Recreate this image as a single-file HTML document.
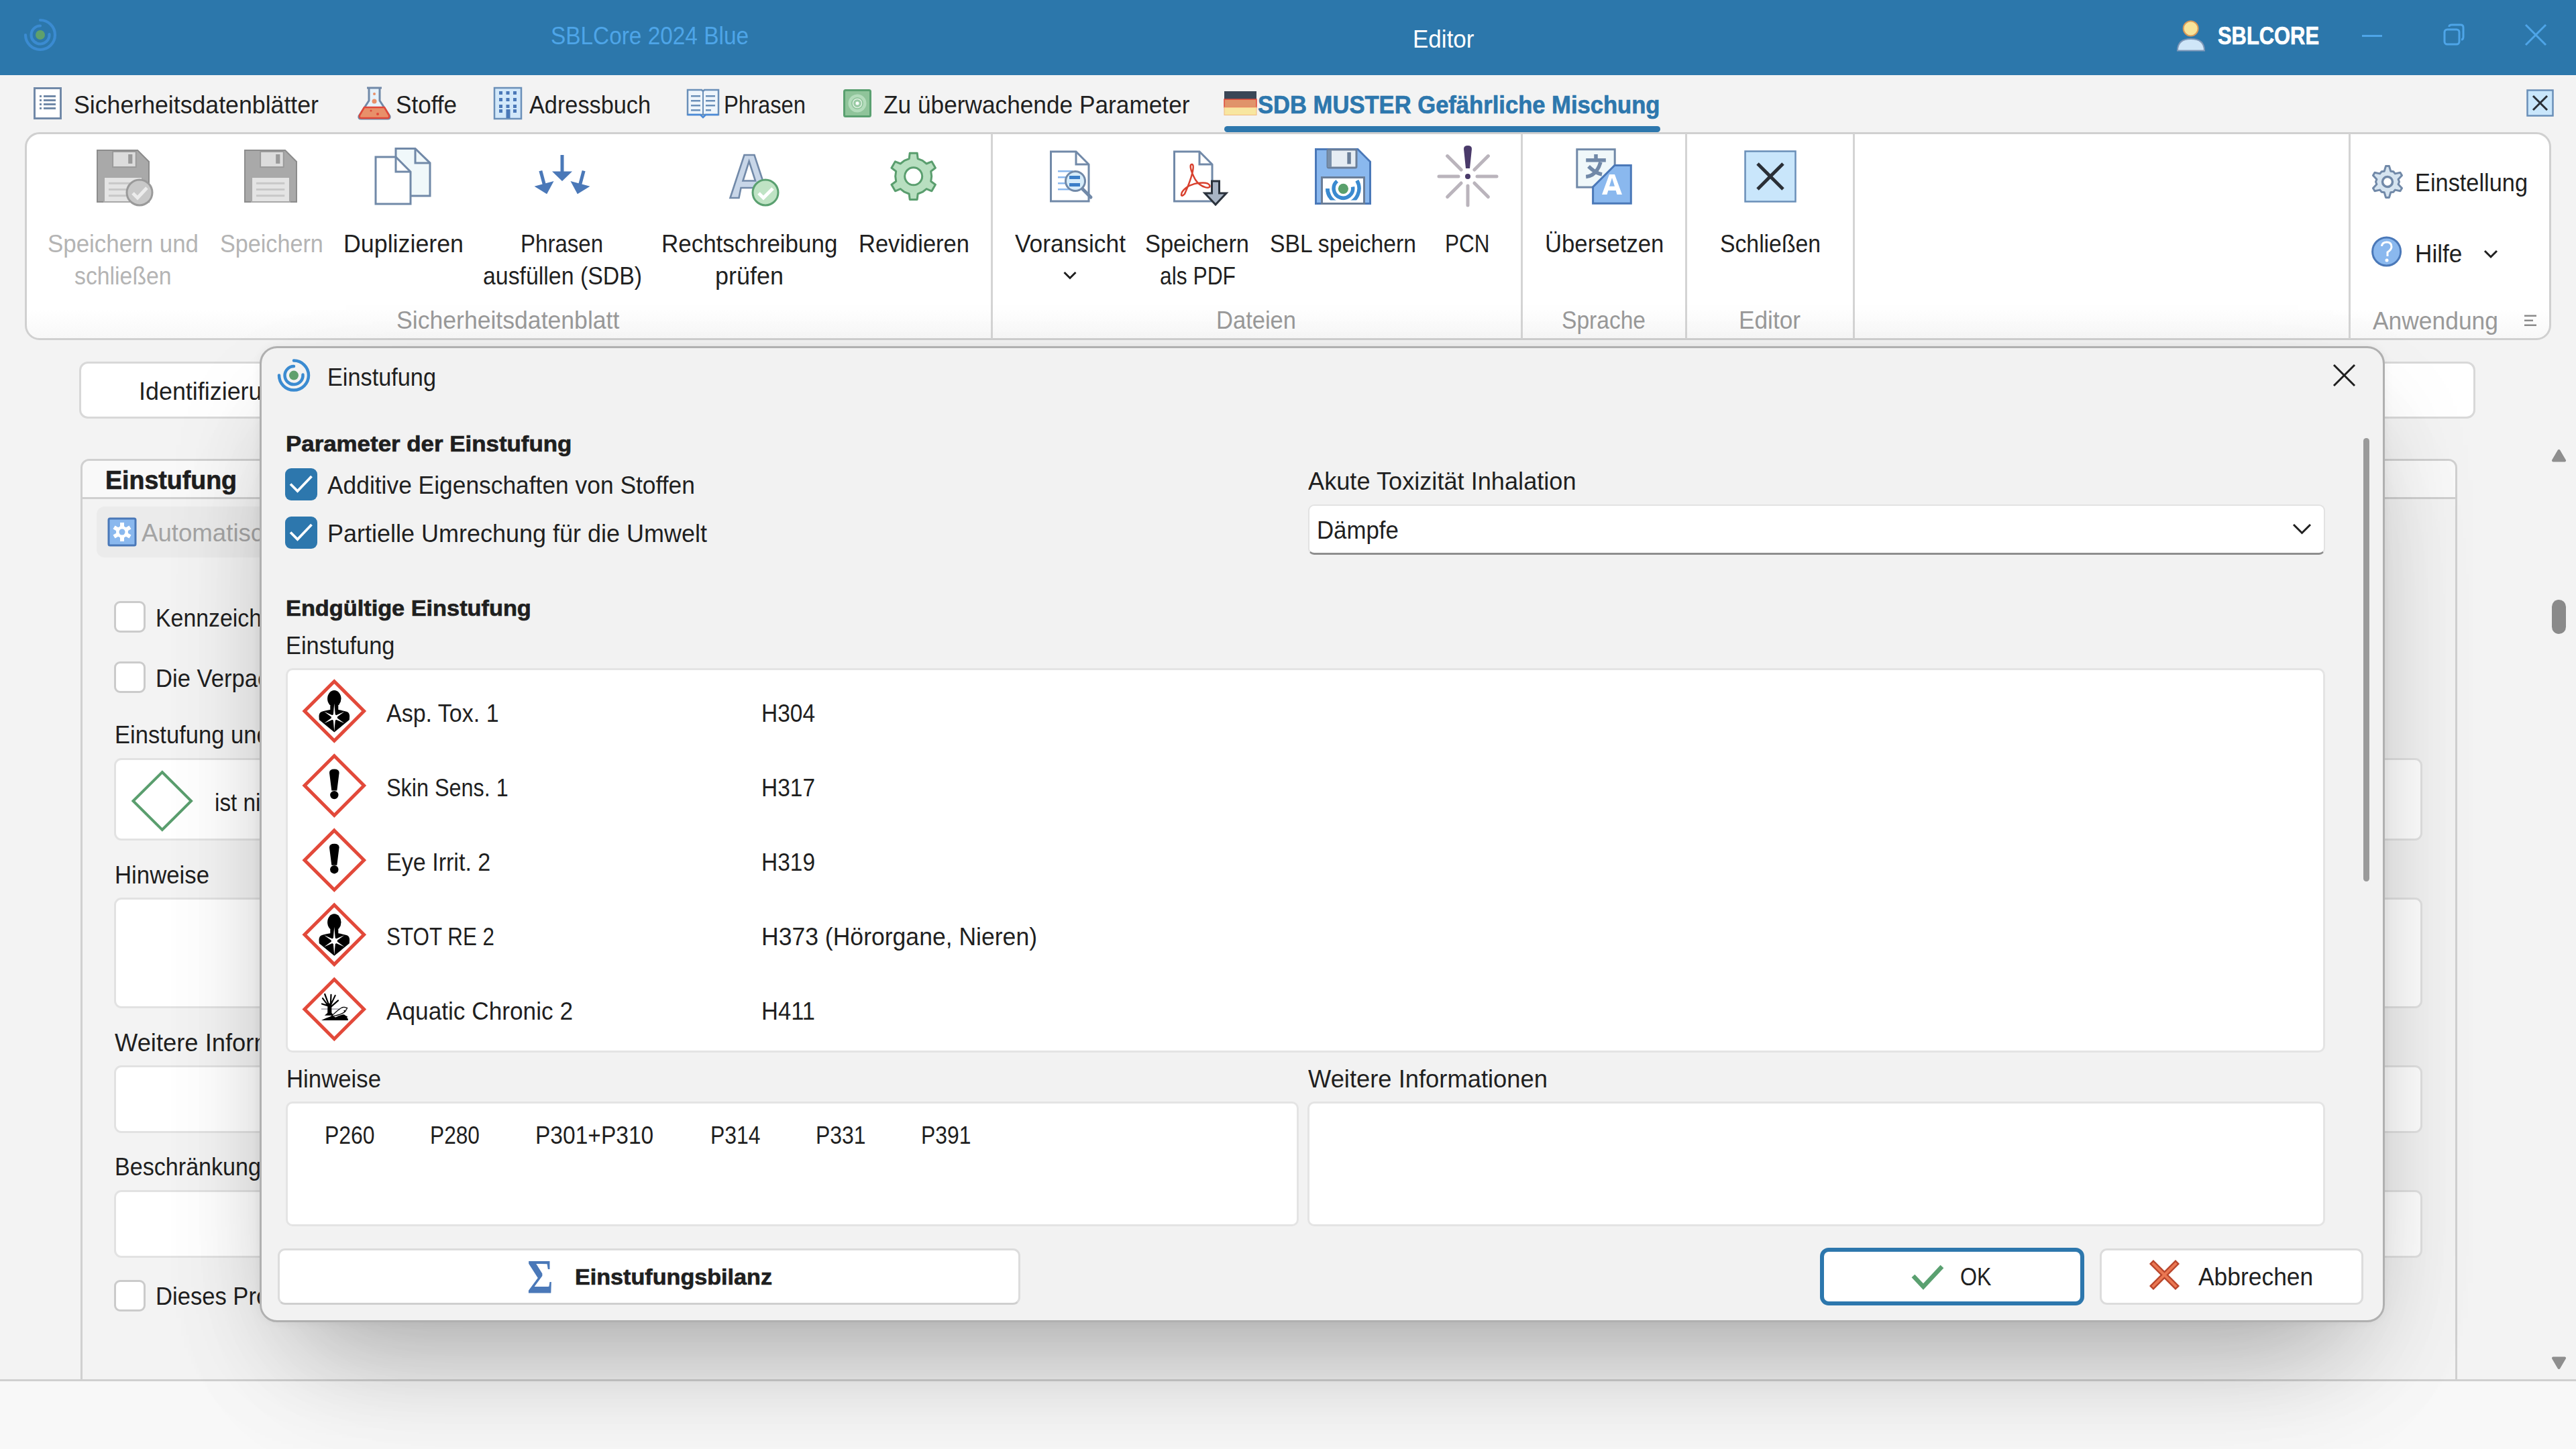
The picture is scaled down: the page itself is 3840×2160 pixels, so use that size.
<!DOCTYPE html>
<html><head><meta charset="utf-8"><style>

*{margin:0;padding:0;box-sizing:border-box}
html,body{width:3840px;height:2160px;overflow:hidden;background:#f3f3f3;font-family:"Liberation Sans",sans-serif}
.a{position:absolute}
.t{position:absolute;line-height:1;white-space:pre;transform-origin:0 0}
svg{position:absolute;overflow:visible}

</style></head><body>
<div class="a" style="left:0;top:0;width:3840px;height:112px;background:#2c77ab"></div>
<svg class="a" style="left:0;top:0" width="1" height="1">
<path d="M 38.0 52.0 A 22.0 22.0 0 1 0 60.0 30.0" fill="none" stroke="#3b8bd1" stroke-width="4.2" stroke-linecap="round"/>
<path d="M 73.5 51.0 A 13.5 13.5 0 1 1 60.0 38.5" fill="none" stroke="#3b8bd1" stroke-width="4.2" stroke-linecap="round"/>
<circle cx="60.0" cy="52.0" r="7.0" fill="#5fa06c"/>
</svg>
<div class="t" style="left:821.0px;top:35.1px;font-size:37px;font-weight:400;color:#4ea5e8;transform:scaleX(0.9020);">SBLCore 2024 Blue</div>
<div class="t" style="left:2105.5px;top:39.5px;font-size:37px;font-weight:400;color:#ffffff;transform:scaleX(0.9467);">Editor</div>
<svg class="a" style="left:0;top:0" width="1" height="1">
<circle cx="3265.7" cy="42.5" r="11" fill="#f9e49a" stroke="#d99a5a" stroke-width="2"/>
<path d="M3246 75.5 Q3246 58 3266 58 Q3286 58 3286 75.5 Z" fill="#cfe6f8" stroke="#7d97b8" stroke-width="2"/>
</svg>
<div class="t" style="left:3306.0px;top:35.1px;font-size:37px;font-weight:700;color:#ffffff;transform:scaleX(0.8347);-webkit-text-stroke:0.7px currentColor;">SBLCORE</div>
<svg class="a" style="left:0;top:0" width="1" height="1">
<line x1="3521" y1="53.5" x2="3551" y2="53.5" stroke="#4ea5e8" stroke-width="3"/>
<rect x="3644" y="44" width="22" height="22" rx="4" fill="none" stroke="#4ea5e8" stroke-width="3"/>
<path d="M3651 40 V39 Q3651 37 3655 37 H3668 Q3672 37 3672 41 V55 Q3672 59 3669 59" fill="none" stroke="#4ea5e8" stroke-width="3"/>
<line x1="3765" y1="37" x2="3795" y2="67" stroke="#4ea5e8" stroke-width="3"/>
<line x1="3795" y1="37" x2="3765" y2="67" stroke="#4ea5e8" stroke-width="3"/>
</svg>
<svg class="a" style="left:0;top:0" width="1" height="1">
<rect x="51.5" y="131.5" width="39" height="45" fill="#fff" stroke="#7189a8" stroke-width="3"/>
<g fill="#7189a8"><rect x="59" y="142" width="3" height="3"/><rect x="59" y="148" width="3" height="3"/><rect x="59" y="154" width="3" height="3"/><rect x="59" y="160" width="3" height="3"/>
<rect x="65" y="142" width="18" height="3"/><rect x="65" y="148" width="18" height="3"/><rect x="65" y="154" width="18" height="3"/><rect x="65" y="160" width="18" height="3"/></g>
</svg>
<div class="t" style="left:110.0px;top:137.6px;font-size:37px;font-weight:400;color:#1f1f1f;transform:scaleX(0.9644);">Sicherheitsdatenblätter</div>
<svg class="a" style="left:0;top:0" width="1" height="1">
<path d="M547 131 H569 M550 131 V150 L535 173 Q534 177 538 177 H578 Q582 177 581 173 L566 150 V131" fill="#e6f2fb" stroke="#7189a8" stroke-width="3" stroke-linejoin="round"/>
<path d="M543 160 L536 172 Q535 176 539 176 H577 Q581 176 580 172 L573 160 Z" fill="#e8906a" stroke="#e0483a" stroke-width="2.5" stroke-linejoin="round"/>
<circle cx="558" cy="140" r="2" fill="#e8906a"/><circle cx="558" cy="151" r="3.5" fill="#e8906a"/>
<circle cx="553" cy="165" r="1.5" fill="#e0483a"/><circle cx="563" cy="170" r="2" fill="#e0483a"/>
</svg>
<div class="t" style="left:590.0px;top:137.6px;font-size:37px;font-weight:400;color:#1f1f1f;transform:scaleX(0.9478);">Stoffe</div>
<svg class="a" style="left:0;top:0" width="1" height="1">
<rect x="737" y="131" width="40" height="46" fill="#d2e8fa" stroke="#6a8fb8" stroke-width="2.5"/>
<g fill="#4a78b8"><rect x="744" y="136" width="5" height="5"/><rect x="754.5" y="136" width="5" height="5"/><rect x="765" y="136" width="5" height="5"/>
<rect x="744" y="146" width="5" height="5"/><rect x="754.5" y="146" width="5" height="5"/><rect x="765" y="146" width="5" height="5"/>
<rect x="744" y="156" width="5" height="5"/><rect x="754.5" y="156" width="5" height="5"/><rect x="765" y="156" width="5" height="5"/>
<rect x="744" y="163" width="5" height="5"/><rect x="765" y="163" width="5" height="5"/><rect x="754.5" y="163" width="6" height="13"/></g>
</svg>
<div class="t" style="left:789.0px;top:137.6px;font-size:37px;font-weight:400;color:#1f1f1f;transform:scaleX(0.9263);">Adressbuch</div>
<svg class="a" style="left:0;top:0" width="1" height="1">
<path d="M1025 134 H1046 L1048 136 L1050 134 H1071 V171 H1025 Z" fill="#eef5fb" stroke="#6a8fb8" stroke-width="2.5"/>
<line x1="1048" y1="136" x2="1048" y2="171" stroke="#6a8fb8" stroke-width="2"/>
<g fill="#6a8fb8"><rect x="1030" y="142" width="14" height="2.5"/><rect x="1030" y="149" width="14" height="2.5"/><rect x="1030" y="156" width="14" height="2.5"/><rect x="1030" y="163" width="14" height="2.5"/>
<rect x="1052" y="142" width="14" height="2.5"/><rect x="1052" y="149" width="14" height="2.5"/><rect x="1052" y="156" width="14" height="2.5"/><rect x="1052" y="163" width="8" height="2.5"/></g>
<path d="M1025 171 H1044 L1048 175 L1052 171 H1071" fill="none" stroke="#4a8ad8" stroke-width="2.5"/>
</svg>
<div class="t" style="left:1079.0px;top:137.6px;font-size:37px;font-weight:400;color:#1f1f1f;transform:scaleX(0.8853);">Phrasen</div>
<svg class="a" style="left:0;top:0" width="1" height="1">
<rect x="1258.5" y="134.5" width="39" height="39" rx="2" fill="#8fc49a" stroke="#5aa070" stroke-width="3"/>
<circle cx="1278" cy="154" r="13.5" fill="#b4dcbc"/>
<circle cx="1278" cy="154" r="9" fill="#8fc49a"/>
<circle cx="1278" cy="154" r="6.5" fill="none" stroke="#dff0e2" stroke-width="1.5"/>
<circle cx="1278" cy="154" r="4.5" fill="#9fcea9"/>
<circle cx="1278" cy="154" r="2.5" fill="#fff"/>
</svg>
<div class="t" style="left:1317.0px;top:137.6px;font-size:37px;font-weight:400;color:#1f1f1f;transform:scaleX(0.9526);">Zu überwachende Parameter</div>
<svg class="a" style="left:0;top:0" width="1" height="1">
<rect x="1825" y="136" width="48" height="12" fill="#3a4656"/>
<rect x="1825" y="148" width="48" height="12" fill="#e0946a" stroke="#e0483a" stroke-width="1.5"/>
<rect x="1825" y="160" width="48" height="11.5" fill="#f8e6a0" stroke="#f2b880" stroke-width="1"/>
</svg>
<div class="t" style="left:1875.0px;top:137.6px;font-size:37px;font-weight:700;color:#2d77ad;transform:scaleX(0.9346);-webkit-text-stroke:0.7px currentColor;">SDB MUSTER Gefährliche Mischung</div>
<div class="a" style="left:1825px;top:188px;width:650px;height:9px;border-radius:5px;background:#2d77ad"></div>
<svg class="a" style="left:0;top:0" width="1" height="1">
<rect x="3767.5" y="134.5" width="38" height="38" fill="#c9e6fb" stroke="#6a8fb8" stroke-width="2.5"/>
<line x1="3776" y1="143" x2="3797" y2="164" stroke="#2a2f36" stroke-width="3"/>
<line x1="3797" y1="143" x2="3776" y2="164" stroke="#2a2f36" stroke-width="3"/>
</svg>
<div class="a" style="left:37px;top:197px;width:3766px;height:310px;border:3px solid #d0d0d0;border-radius:22px;background:linear-gradient(#fff 0,#fff 86%,#f8f8f8 100%)"></div>
<div class="a" style="left:1477px;top:199px;width:3px;height:306px;background:#d4d4d4"></div>
<div class="a" style="left:2267px;top:199px;width:3px;height:306px;background:#d4d4d4"></div>
<div class="a" style="left:2512px;top:199px;width:3px;height:306px;background:#d4d4d4"></div>
<div class="a" style="left:2762px;top:199px;width:3px;height:306px;background:#d4d4d4"></div>
<div class="a" style="left:3501px;top:199px;width:3px;height:306px;background:#d4d4d4"></div>
<svg class="a" style="left:0;top:0" width="1" height="1"><path d="M145 224 H205.06 L222 240.94 V301 H145 Z" fill="#a9a9a9" stroke="#8c8c8c" stroke-width="2"/><rect x="168.1" y="226" width="34.65" height="23.099999999999998" fill="#dcdcdc" stroke="#9a9a9a" stroke-width="2"/><rect x="191.2" y="230" width="6.16" height="13.86" fill="#9a9a9a"/><rect x="155.01" y="264.04" width="56.98" height="36.96" fill="#e4e4e4" stroke="#a8a8a8" stroke-width="2"/><rect x="161.94" y="271.74" width="42.35" height="3" fill="#c8c8c8"/><rect x="161.94" y="280.98" width="42.35" height="3" fill="#c8c8c8"/><rect x="161.94" y="290.22" width="42.35" height="3" fill="#c8c8c8"/><circle cx="208" cy="287" r="19" fill="#c8c8c8" stroke="#9a9a9a" stroke-width="3"/><path d="M198 288 L205 295 L219 280" fill="none" stroke="#ececec" stroke-width="5"/></svg>
<div class="t" style="left:71.0px;top:345.4px;font-size:37px;font-weight:400;color:#b4b4b4;transform:scaleX(0.9429);">Speichern und</div>
<div class="t" style="left:111.4px;top:392.9px;font-size:37px;font-weight:400;color:#b4b4b4;transform:scaleX(0.9131);">schließen</div>
<svg class="a" style="left:0;top:0" width="1" height="1"><path d="M365 224 H425.06 L442 240.94 V301 H365 Z" fill="#a9a9a9" stroke="#8c8c8c" stroke-width="2"/><rect x="388.1" y="226" width="34.65" height="23.099999999999998" fill="#dcdcdc" stroke="#9a9a9a" stroke-width="2"/><rect x="411.2" y="230" width="6.16" height="13.86" fill="#9a9a9a"/><rect x="375.01" y="264.04" width="56.98" height="36.96" fill="#e4e4e4" stroke="#a8a8a8" stroke-width="2"/><rect x="381.94" y="271.74" width="42.35" height="3" fill="#c8c8c8"/><rect x="381.94" y="280.98" width="42.35" height="3" fill="#c8c8c8"/><rect x="381.94" y="290.22" width="42.35" height="3" fill="#c8c8c8"/></svg>
<div class="t" style="left:327.8px;top:345.4px;font-size:37px;font-weight:400;color:#b4b4b4;transform:scaleX(0.9231);">Speichern</div>
<svg class="a" style="left:0;top:0" width="1" height="1"><path d="M590 221.5 H619 L641 243 V292 H590 Z" fill="#f0f8fa" stroke="#7189a8" stroke-width="3"/><path d="M619 221.5 V243 H641" fill="none" stroke="#7189a8" stroke-width="3"/><path d="M560 234 H590 L612 256 V304 H560 Z" fill="#fff" stroke="#7189a8" stroke-width="3"/><path d="M590 234 V256 H612" fill="none" stroke="#7189a8" stroke-width="3"/></svg>
<div class="t" style="left:512.0px;top:345.4px;font-size:37px;font-weight:400;color:#1f1f1f;transform:scaleX(0.9671);">Duplizieren</div>
<svg class="a" style="left:0;top:0" width="1" height="1"><g fill="#4a78b8"><rect x="835.5" y="231" width="5" height="26"/><path d="M823 255.5 H853 L838 270 Z"/></g><g fill="#4a78b8" transform="rotate(-15 810 270)"><rect x="807.5" y="254" width="5" height="22"/><path d="M795 274 H825 L810 290 Z"/></g><g fill="#4a78b8" transform="rotate(15 866 270)"><rect x="863.5" y="254" width="5" height="22"/><path d="M851 274 H881 L866 290 Z"/></g></svg>
<div class="t" style="left:776.0px;top:345.4px;font-size:37px;font-weight:400;color:#1f1f1f;transform:scaleX(0.8925);">Phrasen</div>
<div class="t" style="left:719.5px;top:392.9px;font-size:37px;font-weight:400;color:#1f1f1f;transform:scaleX(0.9147);">ausfüllen (SDB)</div>
<svg class="a" style="left:0;top:0" width="1" height="1"><path d="M1088.5 295 L1109.5 231 H1124.5 L1145.5 295 H1132 L1127 280 H1104.5 L1101.5 295 Z M1116.6 240.5 L1126 269.5 H1107.5 Z" fill="#c8d6e8" stroke="#7189a8" stroke-width="2.6" fill-rule="evenodd" stroke-linejoin="miter"/><circle cx="1141" cy="287" r="19" fill="#bfe3c4" stroke="#5aa070" stroke-width="3"/><path d="M1131 288 L1138 295 L1152 281" fill="none" stroke="#fff" stroke-width="5"/></svg>
<div class="t" style="left:986.3px;top:345.4px;font-size:37px;font-weight:400;color:#1f1f1f;transform:scaleX(0.9450);">Rechtschreibung</div>
<div class="t" style="left:1065.8px;top:392.9px;font-size:37px;font-weight:400;color:#1f1f1f;transform:scaleX(0.9722);">prüfen</div>
<svg class="a" style="left:0;top:0" width="1" height="1"><polygon points="1355.2,236.6 1356.2,228.2 1367.2,228.2 1368.2,236.6 1375.2,239.4 1381.1,244.0 1388.9,240.8 1394.4,250.3 1387.7,255.4 1388.7,262.8 1387.7,270.2 1394.4,275.3 1388.9,284.8 1381.1,281.6 1375.2,286.2 1368.2,289.0 1367.2,297.4 1356.2,297.4 1355.2,289.0 1348.2,286.2 1342.3,281.6 1334.5,284.8 1329.0,275.3 1335.7,270.2 1334.7,262.8 1335.7,255.4 1329.0,250.3 1334.5,240.8 1342.3,244.0 1348.2,239.4" fill="#b8dfc0" stroke="#5a9e6e" stroke-width="3" stroke-linejoin="round"/><circle cx="1361.7" cy="262.8" r="13" fill="#fff" stroke="#5a9e6e" stroke-width="3"/></svg>
<div class="t" style="left:1279.5px;top:345.4px;font-size:37px;font-weight:400;color:#1f1f1f;transform:scaleX(0.9329);">Revidieren</div>
<div class="t" style="left:591.0px;top:459.1px;font-size:37px;font-weight:400;color:#999999;transform:scaleX(0.9619);">Sicherheitsdatenblatt</div>
<svg class="a" style="left:0;top:0" width="1" height="1"><path d="M1566.5 226 H1604 L1623 245 V300 H1566.5 Z" fill="#fff" stroke="#7189a8" stroke-width="3"/><path d="M1604 226 V245 H1623" fill="none" stroke="#7189a8" stroke-width="3"/><g fill="#8ab8ee"><rect x="1577" y="254" width="22" height="2.5"/><rect x="1577" y="263" width="22" height="2.5"/><rect x="1577" y="272" width="22" height="2.5"/><rect x="1577" y="281" width="22" height="2.5"/></g><line x1="1611" y1="279" x2="1626" y2="294" stroke="#7189a8" stroke-width="5" stroke-linecap="round"/><circle cx="1603" cy="270" r="14.5" fill="#d6ecfa" stroke="#7189a8" stroke-width="3"/><path d="M1594 262 H1610 V267 H1594 Z M1594 273 H1610 V278 H1594 Z" fill="#3a7ec8"/></svg>
<div class="t" style="left:1512.5px;top:345.4px;font-size:37px;font-weight:400;color:#1f1f1f;transform:scaleX(0.9550);">Voransicht</div>
<svg class="a" style="left:0;top:0" width="1" height="1"><path d="M1586.5 406 L1595 414.5 L1603.5 406" fill="none" stroke="#1f1f1f" stroke-width="3"/></svg>
<svg class="a" style="left:0;top:0" width="1" height="1"><path d="M1750.5 226 H1788 L1807 245 V300 H1750.5 Z" fill="#fff" stroke="#7189a8" stroke-width="3"/><path d="M1788 226 V245 H1807" fill="none" stroke="#7189a8" stroke-width="3"/><path d="M1766 289 C1760 296 1758 288 1768 280 C1778 272 1800 270 1803 276 C1806 283 1790 280 1782 268 C1774 254 1773 244 1777 245 C1781 246 1778 262 1766 289 Z" fill="none" stroke="#d8402e" stroke-width="2.5"/><path d="M1806.5 270 H1817.5 V288 H1828 L1812 305 L1796 288 H1806.5 Z" fill="#a8b4c4" stroke="#2a323c" stroke-width="3" stroke-linejoin="miter"/></svg>
<div class="t" style="left:1707.3px;top:345.4px;font-size:37px;font-weight:400;color:#1f1f1f;transform:scaleX(0.9303);">Speichern</div>
<div class="t" style="left:1728.7px;top:392.9px;font-size:37px;font-weight:400;color:#1f1f1f;transform:scaleX(0.8588);">als PDF</div>
<svg class="a" style="left:0;top:0" width="1" height="1"><defs><clipPath id="lbl"><rect x="1971" y="265" width="62" height="33.5"/></clipPath></defs><path d="M1961.5 222.5 H2024 L2042.5 241 V303.5 H1961.5 Z" fill="#8ab8ee" stroke="#4a78b8" stroke-width="3"/><rect x="1979" y="223" width="43" height="27" rx="2" fill="#e6edf3" stroke="#6a7e98" stroke-width="3"/><rect x="1979" y="224" width="6" height="25" fill="#7a90aa"/><rect x="2008.3" y="227" width="5.5" height="17.5" fill="#6a7e98"/><rect x="1970.5" y="264.5" width="63" height="39" fill="#fff" stroke="#6a7e98" stroke-width="3"/><g clip-path="url(#lbl)" fill="none" stroke="#3a8ad0" stroke-width="5.5"><path d="M1978.9 281.0 A23.5 23.5 0 0 0 1982.0 292.8"/><path d="M1978.9 281.0 A23.5 23.5 0 0 0 1998.3 304.1"/><path d="M2006.5 304.1 A23.5 23.5 0 0 0 2022.8 269.2"/><path d="M1993.2 270.0 A14.3 14.3 0 1 0 2016.5 278.5"/></g><circle cx="2002.4" cy="281.3" r="7.6" fill="#5aa06c"/></svg>
<div class="t" style="left:1892.7px;top:345.4px;font-size:37px;font-weight:400;color:#1f1f1f;transform:scaleX(0.9111);">SBL speichern</div>
<svg class="a" style="left:0;top:0" width="1" height="1"><g stroke="#bab4bc" stroke-width="5" stroke-linecap="round"><line x1="2202.0" y1="263.0" x2="2231.0" y2="263.0"/><line x1="2197.9" y1="272.9" x2="2218.4" y2="293.4"/><line x1="2188.0" y1="277.0" x2="2188.0" y2="306.0"/><line x1="2178.1" y1="272.9" x2="2157.6" y2="293.4"/><line x1="2174.0" y1="263.0" x2="2145.0" y2="263.0"/><line x1="2178.1" y1="253.1" x2="2157.6" y2="232.6"/><line x1="2197.9" y1="253.1" x2="2218.4" y2="232.6"/></g><path d="M2182 222 Q2182 217 2188 217 Q2194 217 2194 222 L2191 251 H2185 Z" fill="#4a3a6a"/><circle cx="2188" cy="263" r="4" fill="#4a3a6a"/></svg>
<div class="t" style="left:2153.5px;top:345.4px;font-size:37px;font-weight:400;color:#1f1f1f;transform:scaleX(0.8512);">PCN</div>
<svg class="a" style="left:0;top:0" width="1" height="1"><rect x="2350.8" y="222.7" width="56.4" height="56.4" fill="#f0f8fa" stroke="#7189a8" stroke-width="3"/><g fill="none" stroke="#7189a8" stroke-width="5.5"><line x1="2379" y1="230" x2="2379" y2="238"/><line x1="2364.2" y1="238.8" x2="2393.8" y2="238.8"/><path d="M2386 241.6 Q2380 262 2364.2 263.5"/><path d="M2368 248 Q2378 258 2388 260"/></g><path d="M2406.9 246.5 H2431.3 V303.2 H2374.6 V278.7 Z" fill="#8ab8ee" stroke="#4a78b8" stroke-width="3"/><path d="M2388 290 L2399 260 H2407 L2418 290 H2410.5 L2408.7 284 H2397.3 L2395.5 290 Z M2399 277.8 H2407 L2403 265 Z" fill="#fff" fill-rule="evenodd"/></svg>
<div class="t" style="left:2302.6px;top:345.4px;font-size:37px;font-weight:400;color:#1f1f1f;transform:scaleX(0.9375);">Übersetzen</div>
<div class="t" style="left:2327.5px;top:459.1px;font-size:37px;font-weight:400;color:#999999;transform:scaleX(0.9070);">Sprache</div>
<svg class="a" style="left:0;top:0" width="1" height="1"><rect x="2601.5" y="225.5" width="75" height="75" fill="#c9e6fb" stroke="#6a8fb8" stroke-width="2.5"/><line x1="2620" y1="244" x2="2658" y2="282" stroke="#2a2f36" stroke-width="5"/><line x1="2658" y1="244" x2="2620" y2="282" stroke="#2a2f36" stroke-width="5"/></svg>
<div class="t" style="left:2564.0px;top:345.4px;font-size:37px;font-weight:400;color:#1f1f1f;transform:scaleX(0.9117);">Schließen</div>
<div class="t" style="left:2592.3px;top:459.1px;font-size:37px;font-weight:400;color:#999999;transform:scaleX(0.9518);">Editor</div>
<div class="t" style="left:1813.2px;top:459.1px;font-size:37px;font-weight:400;color:#999999;transform:scaleX(0.9331);">Dateien</div>
<svg class="a" style="left:0;top:0" width="1" height="1"><polygon points="3554.2,255.2 3556.5,247.6 3561.5,247.6 3563.8,255.2 3567.8,255.8 3570.3,258.9 3578.0,257.2 3580.5,261.4 3575.1,267.3 3576.5,271.0 3575.1,274.7 3580.5,280.6 3578.0,284.8 3570.3,283.1 3567.8,286.2 3563.8,286.8 3561.5,294.4 3556.5,294.4 3554.2,286.8 3550.2,286.2 3547.7,283.1 3540.0,284.8 3537.5,280.6 3542.9,274.7 3541.5,271.0 3542.9,267.3 3537.5,261.4 3540.0,257.2 3547.7,258.9 3550.2,255.8" fill="#d6e4f0" stroke="#7189a8" stroke-width="3" stroke-linejoin="round"/><circle cx="3559" cy="271" r="7.5" fill="#fff" stroke="#7189a8" stroke-width="3.5"/></svg>
<div class="t" style="left:3600.0px;top:254.2px;font-size:37px;font-weight:400;color:#1f1f1f;transform:scaleX(0.9281);">Einstellung</div>
<svg class="a" style="left:0;top:0" width="1" height="1"><circle cx="3557.6" cy="375" r="21" fill="#8ab8ee" stroke="#4a78b8" stroke-width="3"/><path d="M3550.5 367 Q3551 361 3558 361 Q3565 361 3565 368 Q3565 372 3559 376 V382" fill="none" stroke="#fff" stroke-width="3"/><circle cx="3558" cy="388" r="2.5" fill="#fff"/></svg>
<div class="t" style="left:3600.0px;top:360.2px;font-size:37px;font-weight:400;color:#1f1f1f;transform:scaleX(0.9509);">Hilfe</div>
<svg class="a" style="left:0;top:0" width="1" height="1"><path d="M3704 374 L3713 383 L3722 374" fill="none" stroke="#1f1f1f" stroke-width="3"/></svg>
<div class="t" style="left:3537.0px;top:459.6px;font-size:37px;font-weight:400;color:#999999;transform:scaleX(0.9568);">Anwendung</div>
<svg class="a" style="left:0;top:0" width="1" height="1"><g fill="#8a8a8a"><rect x="3763" y="469.5" width="18" height="2.5"/><rect x="3763" y="476.5" width="13" height="2.5"/><rect x="3763" y="483.5" width="18" height="2.5"/></g></svg>
<div class="a" style="left:118px;top:539px;width:3572px;height:85px;border:3px solid #d8d8d8;border-radius:13px;background:#fff;"></div>
<div class="t" style="left:207.4px;top:564.8px;font-size:37px;font-weight:400;color:#1f1f1f;transform:scaleX(0.9700);">Identifizierung</div>
<div class="a" style="left:120px;top:684px;width:3543px;height:1500px;border:3px solid #d0d0d0;border-radius:13px;background:#f3f3f3"></div>
<div class="a" style="left:123px;top:687px;width:3537px;height:57px;border-radius:10px 10px 0 0;background:#f9f9f9;border-bottom:3px solid #d0d0d0"></div>
<div class="t" style="left:157.0px;top:696.1px;font-size:39px;font-weight:700;color:#1f1f1f;transform:scaleX(0.9625);-webkit-text-stroke:0.7px currentColor;">Einstufung</div>
<div class="a" style="left:144px;top:755px;width:556px;height:76px;border:none;border-radius:12px;background:#ebebeb;"></div>
<svg class="a" style="left:0;top:0" width="1" height="1">
<rect x="162" y="773" width="40" height="40" rx="2" fill="#8ab8ee" stroke="#4a78b8" stroke-width="3"/>
<g stroke="#fff" stroke-width="6"><line x1="182" y1="779" x2="182" y2="807"/><line x1="170" y1="786" x2="194" y2="800"/><line x1="170" y1="800" x2="194" y2="786"/></g>
<circle cx="182" cy="793" r="9" fill="#fff"/><circle cx="182" cy="793" r="4.5" fill="#8ab8ee"/>
</svg>
<div class="t" style="left:211.4px;top:775.9px;font-size:37px;font-weight:400;color:#a4a4a4;transform:scaleX(0.9900);">Automatisch einstufen</div>
<div class="a" style="left:169.5px;top:895.5px;width:47.0px;height:47.0px;border:3px solid #cbcbcb;border-radius:9px;background:#fff;"></div>
<div class="t" style="left:232.0px;top:903.0px;font-size:37px;font-weight:400;color:#1f1f1f;transform:scaleX(0.9150);">Kennzeichnung nicht erforderlich</div>
<div class="a" style="left:169.5px;top:985.5px;width:47.0px;height:47.0px;border:3px solid #cbcbcb;border-radius:9px;background:#fff;"></div>
<div class="t" style="left:232.0px;top:992.8px;font-size:37px;font-weight:400;color:#1f1f1f;transform:scaleX(0.9350);">Die Verpackung</div>
<div class="t" style="left:171.0px;top:1077.2px;font-size:37px;font-weight:400;color:#1f1f1f;transform:scaleX(0.9350);">Einstufung und Kennzeichnung</div>
<div class="a" style="left:170px;top:1130px;width:3441px;height:123px;border:3px solid #e2e2e2;border-radius:11px;background:#fff;"></div>
<svg class="a" style="left:0;top:0" width="1" height="1">
<path d="M241.8 1151 L285 1194 L241.8 1237 L198.5 1194 Z" fill="none" stroke="#5a9e6e" stroke-width="4"/>
</svg>
<div class="t" style="left:320.3px;top:1177.8px;font-size:37px;font-weight:400;color:#1f1f1f;transform:scaleX(0.9000);">ist nicht eingestuft</div>
<div class="t" style="left:171.0px;top:1285.5px;font-size:37px;font-weight:400;color:#1f1f1f;transform:scaleX(0.9392);">Hinweise</div>
<div class="a" style="left:170px;top:1338px;width:3441px;height:165px;border:3px solid #e2e2e2;border-radius:11px;background:#fff;"></div>
<div class="t" style="left:171.0px;top:1535.5px;font-size:37px;font-weight:400;color:#1f1f1f;transform:scaleX(0.9825);">Weitere Informationen</div>
<div class="a" style="left:170px;top:1588px;width:3441px;height:101px;border:3px solid #e2e2e2;border-radius:11px;background:#fff;"></div>
<div class="t" style="left:171.0px;top:1721.0px;font-size:37px;font-weight:400;color:#1f1f1f;transform:scaleX(0.9216);">Beschränkung</div>
<div class="a" style="left:170px;top:1774px;width:3441px;height:101px;border:3px solid #e2e2e2;border-radius:11px;background:#fff;"></div>
<div class="a" style="left:169.5px;top:1908px;width:47.0px;height:47px;border:3px solid #cbcbcb;border-radius:9px;background:#fff;"></div>
<div class="t" style="left:232.0px;top:1913.5px;font-size:37px;font-weight:400;color:#1f1f1f;transform:scaleX(0.9350);">Dieses Produkt</div>
<svg class="a" style="left:0;top:0" width="1" height="1">
<path d="M3814.5 672 L3823 686.5 H3806 Z" fill="#8e8e8e" stroke="#8e8e8e" stroke-width="4" stroke-linejoin="round"/>
<rect x="3804" y="894" width="21" height="51" rx="10.5" fill="#8a8a8a"/>
<path d="M3814.5 2039 L3823 2024.5 H3806 Z" fill="#8e8e8e" stroke="#8e8e8e" stroke-width="4" stroke-linejoin="round"/>
</svg>
<div class="a" style="left:0;top:2056px;width:3840px;height:104px;background:#f8f8f8;border-top:3px solid #d0d0d0"></div>
<div class="a" style="left:387px;top:516px;width:3168px;height:1455px;border-radius:26px;box-shadow:0 70px 160px -50px rgba(0,0,0,0.27),0 120px 200px -60px rgba(0,0,0,0.10),0 0 14px rgba(0,0,0,0.05)"></div>
<div class="a" style="left:387px;top:516px;width:3168px;height:1455px;border:3px solid #b0b0b0;border-radius:26px;background:#f2f2f2"></div>
<svg class="a" style="left:0;top:0" width="1" height="1">
<path d="M 416.0 559.6 A 22.0 22.0 0 1 0 438.0 537.6" fill="none" stroke="#3b8bd1" stroke-width="4.5" stroke-linecap="round"/>
<path d="M 451.5 558.6 A 13.5 13.5 0 1 1 438.0 546.1" fill="none" stroke="#3b8bd1" stroke-width="4.5" stroke-linecap="round"/>
<circle cx="438.0" cy="559.6" r="7.0" fill="#5fa06c"/>
</svg>
<div class="t" style="left:487.6px;top:544.2px;font-size:37px;font-weight:400;color:#1f1f1f;transform:scaleX(0.9265);">Einstufung</div>
<svg class="a" style="left:0;top:0" width="1" height="1">
<line x1="3479" y1="544" x2="3510" y2="575" stroke="#1f1f1f" stroke-width="3"/>
<line x1="3510" y1="544" x2="3479" y2="575" stroke="#1f1f1f" stroke-width="3"/>
</svg>
<div class="t" style="left:426.0px;top:645.0px;font-size:33px;font-weight:700;color:#1f1f1f;transform:scaleX(1.0567);-webkit-text-stroke:0.7px currentColor;">Parameter der Einstufung</div>
<div class="a" style="left:425px;top:698px;width:48px;height:48px;border-radius:9px;background:#2d77ad"></div>
<svg class="a" style="left:0;top:0" width="1" height="1"><path d="M433 721.5 L443.5 732 L464.5 710" fill="none" stroke="#fff" stroke-width="3.8"/></svg>
<div class="a" style="left:425px;top:770px;width:48px;height:48px;border-radius:9px;background:#2d77ad"></div>
<svg class="a" style="left:0;top:0" width="1" height="1"><path d="M433 793.5 L443.5 804 L464.5 782" fill="none" stroke="#fff" stroke-width="3.8"/></svg>
<div class="t" style="left:487.6px;top:704.9px;font-size:37px;font-weight:400;color:#1f1f1f;transform:scaleX(0.9557);">Additive Eigenschaften von Stoffen</div>
<div class="t" style="left:487.6px;top:777.0px;font-size:37px;font-weight:400;color:#1f1f1f;transform:scaleX(0.9726);">Partielle Umrechung für die Umwelt</div>
<div class="t" style="left:1950.0px;top:699.3px;font-size:37px;font-weight:400;color:#1f1f1f;transform:scaleX(0.9779);">Akute Toxizität Inhalation</div>
<div class="a" style="left:1950px;top:752px;width:1516px;height:75px;border:2px solid #e2e2e2;border-radius:9px;background:#fff;border-bottom:3px solid #8e8e8e"></div>
<div class="t" style="left:1963.4px;top:772.0px;font-size:37px;font-weight:400;color:#1f1f1f;transform:scaleX(0.9401);">Dämpfe</div>
<svg class="a" style="left:0;top:0" width="1" height="1"><path d="M3419 782 L3431.5 794.5 L3444 782" fill="none" stroke="#1f1f1f" stroke-width="3"/></svg>
<div class="t" style="left:426.2px;top:889.7px;font-size:33px;font-weight:700;color:#1f1f1f;transform:scaleX(1.0393);-webkit-text-stroke:0.7px currentColor;">Endgültige Einstufung</div>
<div class="t" style="left:426.2px;top:943.8px;font-size:37px;font-weight:400;color:#1f1f1f;transform:scaleX(0.9293);">Einstufung</div>
<div class="a" style="left:426px;top:996px;width:3040px;height:573px;border:3px solid #e4e4e4;border-radius:10px;background:#fff;"></div>
<div class="t" style="left:576.4px;top:1044.5px;font-size:37px;font-weight:400;color:#1f1f1f;transform:scaleX(0.9190);">Asp. Tox. 1</div>
<div class="t" style="left:1134.8px;top:1044.5px;font-size:37px;font-weight:400;color:#1f1f1f;transform:scaleX(0.9044);">H304</div>
<div class="t" style="left:576.4px;top:1155.6px;font-size:37px;font-weight:400;color:#1f1f1f;transform:scaleX(0.8747);">Skin Sens. 1</div>
<div class="t" style="left:1134.8px;top:1155.6px;font-size:37px;font-weight:400;color:#1f1f1f;transform:scaleX(0.9044);">H317</div>
<div class="t" style="left:576.4px;top:1266.8px;font-size:37px;font-weight:400;color:#1f1f1f;transform:scaleX(0.9211);">Eye Irrit. 2</div>
<div class="t" style="left:1134.8px;top:1266.8px;font-size:37px;font-weight:400;color:#1f1f1f;transform:scaleX(0.9044);">H319</div>
<div class="t" style="left:576.4px;top:1377.8px;font-size:37px;font-weight:400;color:#1f1f1f;transform:scaleX(0.8479);">STOT RE 2</div>
<div class="t" style="left:1134.8px;top:1377.8px;font-size:37px;font-weight:400;color:#1f1f1f;transform:scaleX(0.9608);">H373 (Hörorgane, Nieren)</div>
<div class="t" style="left:576.4px;top:1489.0px;font-size:37px;font-weight:400;color:#1f1f1f;transform:scaleX(0.9519);">Aquatic Chronic 2</div>
<div class="t" style="left:1134.8px;top:1489.0px;font-size:37px;font-weight:400;color:#1f1f1f;transform:scaleX(0.9333);">H411</div>
<svg class="a" style="left:0;top:0" width="1" height="1"><path d="M498.3 1015.7 L542.6 1060.0 L498.3 1104.3 L454.0 1060.0 Z" fill="#fff" stroke="#e2493a" stroke-width="5" stroke-linejoin="miter"/><ellipse cx="498.3" cy="1041.5" rx="10.2" ry="12.5" fill="#000"/><path d="M492.3 1052.0 L492.3 1058.0 Q483.3 1059.5 479.3 1061.0 Q475.3 1063.0 475.5 1068.0 L475.8 1073.0 L498.3 1091.5 L520.8 1073.0 L521.1 1068.0 Q521.3 1063.0 517.3 1061.0 Q513.3 1059.5 504.3 1058.0 L504.3 1052.0 Z" fill="#000"/><polygon points="498.3,1048.5 499.9,1066.7 513.5,1060.8 501.5,1069.5 513.5,1078.2 499.9,1072.3 498.3,1090.5 496.7,1072.3 483.1,1078.2 495.1,1069.5 483.1,1060.8 496.7,1066.7" fill="#fff"/><circle cx="498.3" cy="1069.5" r="4.5" fill="#fff"/><path d="M498.3 1126.8 L542.6 1171.1 L498.3 1215.3999999999999 L454.0 1171.1 Z" fill="#fff" stroke="#e2493a" stroke-width="5" stroke-linejoin="miter"/><path d="M491.0 1152.1 Q491.0 1146.6 498.3 1146.6 Q505.6 1146.6 505.6 1152.1 L502.3 1178.6 H494.3 Z" fill="#000"/><circle cx="498.3" cy="1185.1" r="6.2" fill="#000"/><path d="M498.3 1237.9 L542.6 1282.2 L498.3 1326.5 L454.0 1282.2 Z" fill="#fff" stroke="#e2493a" stroke-width="5" stroke-linejoin="miter"/><path d="M491.0 1263.2 Q491.0 1257.7 498.3 1257.7 Q505.6 1257.7 505.6 1263.2 L502.3 1289.7 H494.3 Z" fill="#000"/><circle cx="498.3" cy="1296.2" r="6.2" fill="#000"/><path d="M498.3 1349.0 L542.6 1393.3 L498.3 1437.6 L454.0 1393.3 Z" fill="#fff" stroke="#e2493a" stroke-width="5" stroke-linejoin="miter"/><ellipse cx="498.3" cy="1374.8" rx="10.2" ry="12.5" fill="#000"/><path d="M492.3 1385.3 L492.3 1391.3 Q483.3 1392.8 479.3 1394.3 Q475.3 1396.3 475.5 1401.3 L475.8 1406.3 L498.3 1424.8 L520.8 1406.3 L521.1 1401.3 Q521.3 1396.3 517.3 1394.3 Q513.3 1392.8 504.3 1391.3 L504.3 1385.3 Z" fill="#000"/><polygon points="498.3,1381.8 499.9,1400.0 513.5,1394.0 501.5,1402.8 513.5,1411.5 499.9,1405.6 498.3,1423.8 496.7,1405.6 483.1,1411.5 495.1,1402.8 483.1,1394.0 496.7,1400.0" fill="#fff"/><circle cx="498.3" cy="1402.8" r="4.5" fill="#fff"/><path d="M498.3 1460.1000000000001 L542.6 1504.4 L498.3 1548.7 L454.0 1504.4 Z" fill="#fff" stroke="#e2493a" stroke-width="5" stroke-linejoin="miter"/><path d="M479.0 1521.0 L518.8 1521.0 518.8 1518.6 517.1 1517.4 518.1 1515.6 515.3 1514.0 512.8 1512.3 Q508.3 1512.6 504.3 1514.6 L500.3 1516.4 Q497.3 1514.7 493.5 1515.1 Q486.3 1517.4 479.0 1521.0 Z " fill="#000"/><line x1="479.0" y1="1504.1000000000001" x2="517.6" y2="1504.1000000000001" stroke="#8a8a9a" stroke-width="1.3"/><path d="M488.4 1495.8 L494.2 1495.8 494.4 1509.9 497.8 1513.8 483.8 1513.8 488.2 1509.9 Z " fill="#000"/><path d="M490.3 1498.4 L484.2 1482.0 M489.3 1499.4 L481.0 1488.2 M489.3 1499.4 L480.0 1496.5 M492.8 1497.4 L493.5 1482.9 M492.8 1498.4 L499.7 1483.9 M493.8 1500.4 L504.1 1491.4 " fill="none" stroke="#000" stroke-width="2.2" stroke-linecap="round"/><path d="M493.8 1515.2 Q501.3 1507.4 507.3 1503.4 Q510.3 1501.2 513.3 1501.4 L517.6 1502.6 516.1 1505.0 Q515.3 1508.4 510.3 1510.6 Q504.3 1513.6 493.8 1515.2 Z " fill="#fff" stroke="#000" stroke-width="1.2"/><circle cx="513.5" cy="1506.8000000000002" r="1.1" fill="#000"/></svg>
<div class="t" style="left:426.7px;top:1589.5px;font-size:37px;font-weight:400;color:#1f1f1f;transform:scaleX(0.9392);">Hinweise</div>
<div class="t" style="left:1949.5px;top:1589.5px;font-size:37px;font-weight:400;color:#1f1f1f;transform:scaleX(0.9825);">Weitere Informationen</div>
<div class="a" style="left:426px;top:1642px;width:1510px;height:186px;border:3px solid #e4e4e4;border-radius:10px;background:#fff;"></div>
<div class="a" style="left:1949px;top:1642px;width:1517px;height:186px;border:3px solid #e4e4e4;border-radius:10px;background:#fff;"></div>
<div class="t" style="left:483.5px;top:1673.5px;font-size:37px;font-weight:400;color:#1f1f1f;transform:scaleX(0.8621);">P260</div>
<div class="t" style="left:640.6px;top:1673.5px;font-size:37px;font-weight:400;color:#1f1f1f;transform:scaleX(0.8563);">P280</div>
<div class="t" style="left:797.7px;top:1673.5px;font-size:37px;font-weight:400;color:#1f1f1f;transform:scaleX(0.9062);">P301+P310</div>
<div class="t" style="left:1059.4px;top:1673.5px;font-size:37px;font-weight:400;color:#1f1f1f;transform:scaleX(0.8621);">P314</div>
<div class="t" style="left:1216.0px;top:1673.5px;font-size:37px;font-weight:400;color:#1f1f1f;transform:scaleX(0.8621);">P331</div>
<div class="t" style="left:1373.0px;top:1673.5px;font-size:37px;font-weight:400;color:#1f1f1f;transform:scaleX(0.8621);">P391</div>
<div class="a" style="left:414px;top:1861px;width:1107px;height:84px;border:3px solid #dcdcdc;border-radius:11px;background:#fff;border-bottom-color:#cfcfcf"></div>
<div class="t" style="left:786.0px;top:1866.8px;font-size:72px;font-weight:700;color:#4a78b8;transform:scaleX(0.8199);font-family:'Liberation Serif';">Σ</div>
<div class="t" style="left:856.5px;top:1887.0px;font-size:33px;font-weight:700;color:#1f1f1f;transform:scaleX(1.0346);-webkit-text-stroke:0.7px currentColor;">Einstufungsbilanz</div>
<div class="a" style="left:2713px;top:1860px;width:394px;height:86px;border:6px solid #2d77ad;border-radius:13px;background:#fff;"></div>
<svg class="a" style="left:0;top:0" width="1" height="1"><path d="M2852 1902 L2867 1918 L2895 1888" fill="none" stroke="#5aa070" stroke-width="6.5"/></svg>
<div class="t" style="left:2921.8px;top:1885.2px;font-size:37px;font-weight:400;color:#1f1f1f;transform:scaleX(0.8697);">OK</div>
<div class="a" style="left:3130px;top:1861px;width:393px;height:84px;border:3px solid #dcdcdc;border-radius:11px;background:#fff;"></div>
<svg class="a" style="left:0;top:0" width="1" height="1">
<g stroke="#b8442a" stroke-width="8.5" stroke-linecap="square"><line x1="3210" y1="1884" x2="3243" y2="1917"/><line x1="3243" y1="1884" x2="3210" y2="1917"/></g>
<g stroke="#ea7752" stroke-width="4" stroke-linecap="square"><line x1="3210" y1="1884" x2="3243" y2="1917"/><line x1="3243" y1="1884" x2="3210" y2="1917"/></g>
</svg>
<div class="t" style="left:3276.8px;top:1885.2px;font-size:37px;font-weight:400;color:#1f1f1f;transform:scaleX(0.9566);">Abbrechen</div>
<div class="a" style="left:3523px;top:653px;width:9px;height:661px;border-radius:5px;background:#9a9a9a"></div>
</body></html>
